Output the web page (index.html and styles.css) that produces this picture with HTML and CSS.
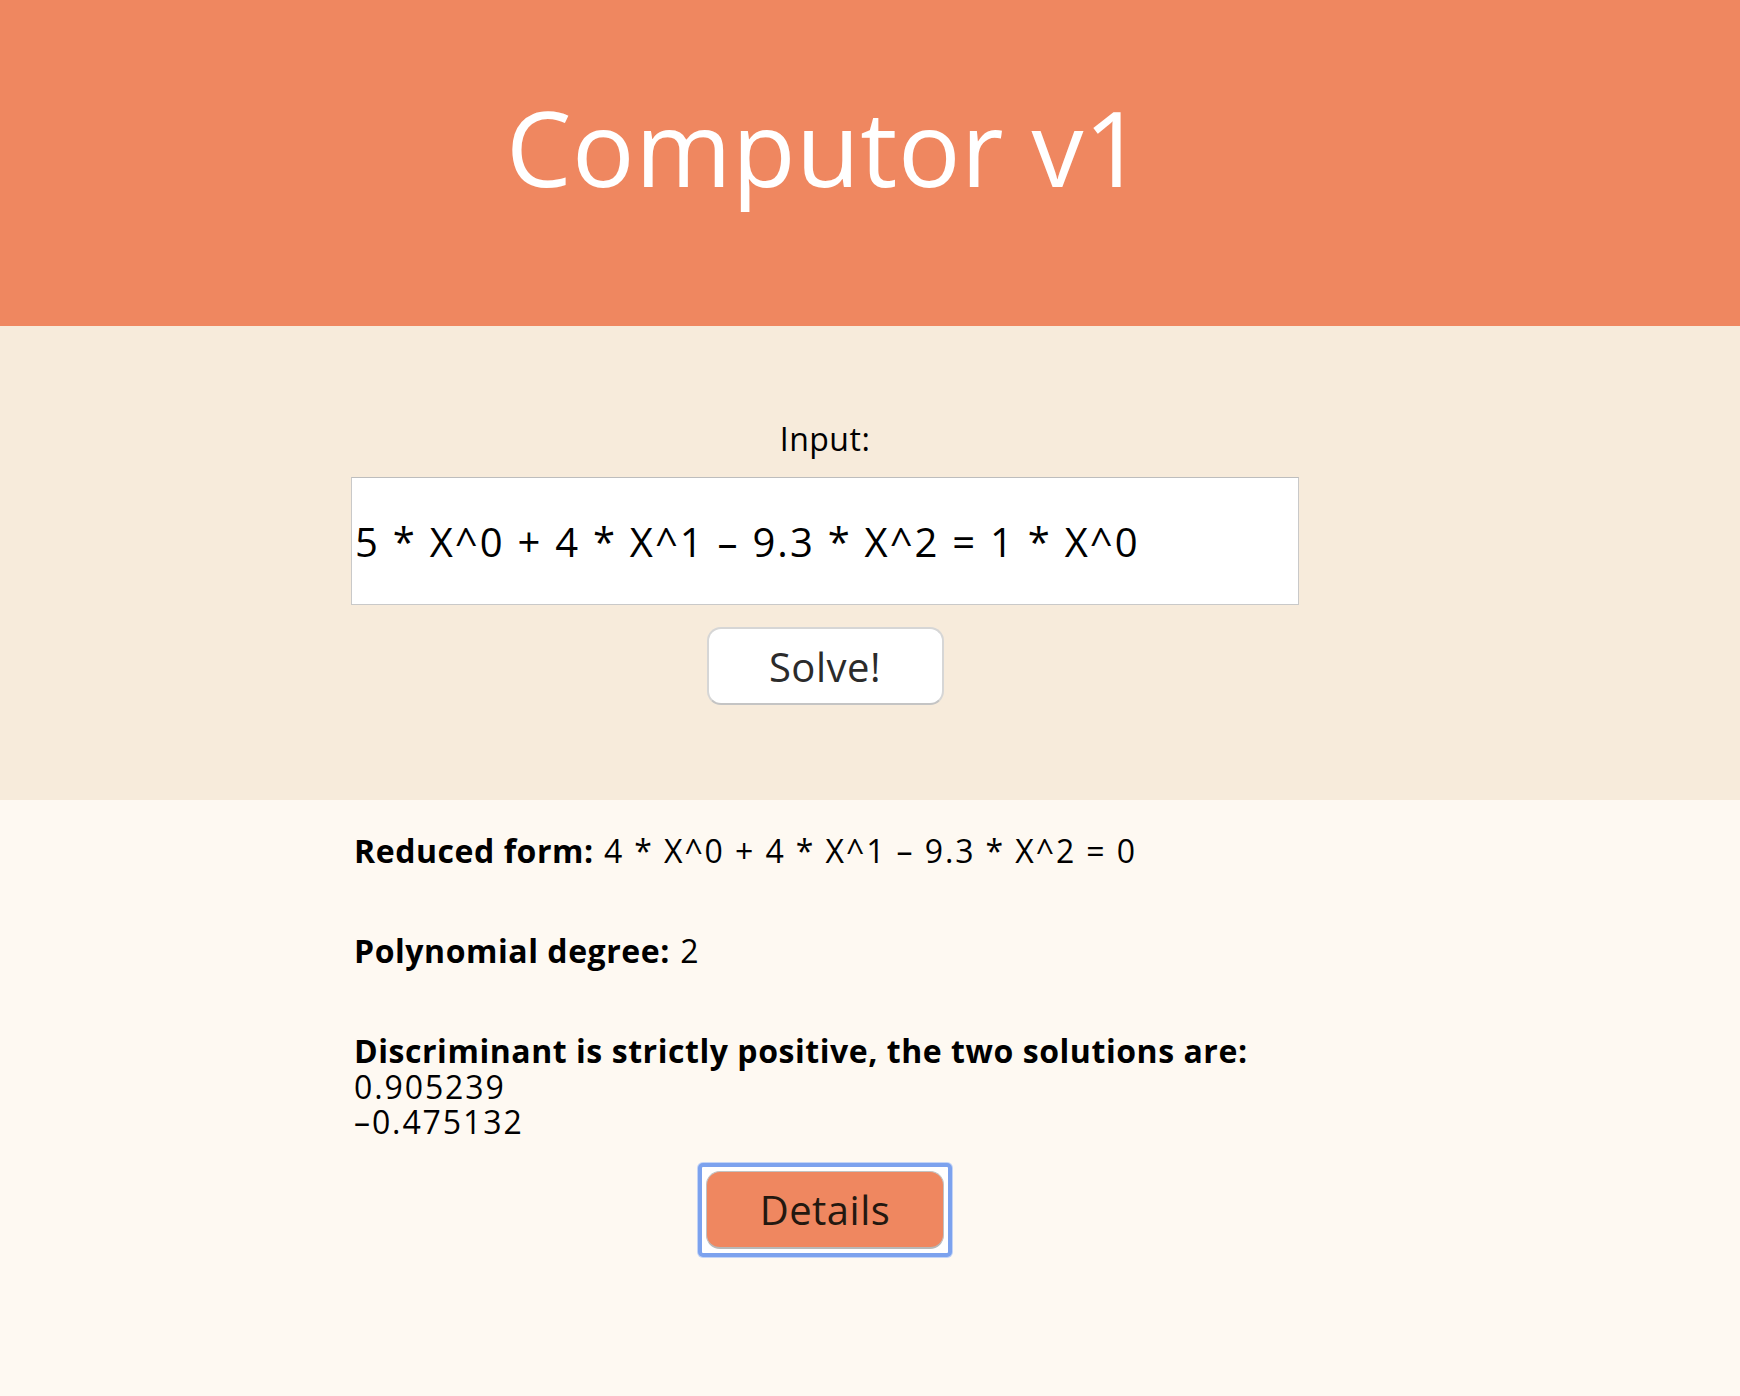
FILE: index.html
```html
<!DOCTYPE html>
<html lang="en">
<head>
<meta charset="utf-8">
<title>Computor v1</title>
<link rel="stylesheet" href="styles.css">
</head>
<body>
<header class="header">
  <h1 class="title">Computor v1</h1>
</header>
<section class="form-section">
  <div class="column form-column">
    <label class="input-label" for="eq">Input:</label>
    <input class="eq-input" id="eq" type="text" value="5 * X^0 + 4 * X^1 – 9.3 * X^2 = 1 * X^0">
    <button class="solve-btn" type="button">Solve!</button>
  </div>
</section>
<main class="results-section">
  <div class="column results-column">
    <p class="result-line"><b>Reduced form:</b> 4 * X^0 + 4 * X^1 – 9.3 * X^2 = 0</p>
    <p class="result-line"><b>Polynomial degree:</b> 2</p>
    <div class="result-line solutions">
      <b>Discriminant is strictly positive, the two solutions are:</b><br>
      0.905239<br>
      –0.475132
    </div>
    <div class="details-wrap">
      <span class="focus-ring"><button class="details-btn" type="button">Details</button></span>
    </div>
  </div>
</main>
</body>
</html>
```

FILE: styles.css
```css
html, body {
  margin: 0;
  padding: 0;
}

body {
  font-family: "Open Sans", "DejaVu Sans", sans-serif;
  background: #fef9f2;
  color: #000;
}

.header {
  background: #ef8760;
  height: 326px;
  box-sizing: border-box;
  padding: 95px 90px 0 0;
}

.title {
  margin: 0;
  text-align: center;
  color: #fff;
  font-weight: 400;
  font-size: 104px;
  line-height: 104px;
  letter-spacing: 0.5px;
}

.form-section {
  background: #f7ebdb;
  padding: 95px 90px 95px 0;
}

.column {
  width: 948px;
  margin: 0 auto;
}

.form-column {
  display: flex;
  flex-direction: column;
  align-items: center;
}

.input-label {
  display: block;
  font-size: 32px;
  line-height: 36px;
  margin-bottom: 20px;
  letter-spacing: 0.5px;
}

.eq-input {
  display: block;
  width: 948px;
  height: 128px;
  box-sizing: border-box;
  border: 1px solid #c9c9c9;
  border-top-color: #bdbdbd;
  background: #fff;
  padding: 0 4px 0 3px;
  margin: 0 0 22px 0;
  font-family: "Open Sans", "DejaVu Sans", sans-serif;
  font-size: 40px;
  letter-spacing: 2px;
  word-spacing: 0.5px;
  color: #000;
  outline: none;
}

.solve-btn {
  width: 237px;
  height: 78px;
  box-sizing: border-box;
  background: #fff;
  border: 2px solid #d6d6d6;
  border-bottom-color: #c4c4c4;
  border-radius: 14px;
  font-family: "Open Sans", "DejaVu Sans", sans-serif;
  font-size: 40px;
  letter-spacing: 0.5px;
  color: #2b2b2b;
  padding: 0;
}

.results-section {
  padding: 33px 90px 120px 0;
}

.results-column {
  padding-left: 3px;
  box-sizing: border-box;
}

.result-line {
  margin: 0 0 64px 0;
  font-size: 32px;
  line-height: 36px;
  letter-spacing: 1.9px;
  word-spacing: 0;
}

.result-line b {
  font-weight: 700;
  letter-spacing: 0.55px;
  word-spacing: 0;
}

.solutions {
  margin-bottom: 0;
  line-height: 35.6px;
}

.details-wrap {
  display: flex;
  justify-content: center;
  margin-top: 23px;
  margin-left: -3px;
}

.focus-ring {
  display: inline-flex;
  padding: 4px;
  background: #fff;
  border: 4px solid #7ca2ee;
  border-radius: 5px;
  box-shadow: 0 0 0 1px #c3d4f6;
}

.details-btn {
  width: 238px;
  height: 78px;
  box-sizing: border-box;
  background: #ef8760;
  border: 1px solid #c2c2c2;
  border-bottom: 2px solid #b8b8b8;
  border-radius: 14px;
  font-family: "Open Sans", "DejaVu Sans", sans-serif;
  font-size: 40px;
  letter-spacing: 0.5px;
  color: #231810;
  padding: 0;
}
```
